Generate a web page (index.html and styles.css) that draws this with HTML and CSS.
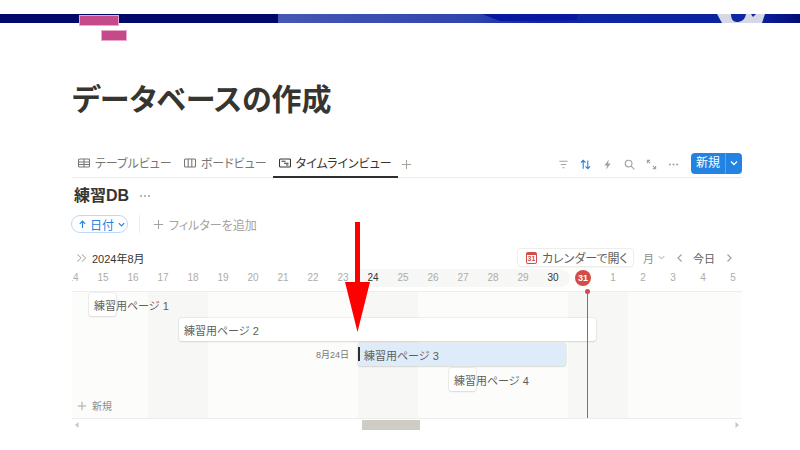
FILE: index.html
```html
<!DOCTYPE html>
<html lang="ja">
<head>
    <meta charset="UTF-8">
    <title>データベースの作成</title>
    <link rel="stylesheet" href="styles.css">
</head>
<body>
    <div class="banner">
        <svg width="800" height="9" viewBox="0 0 800 9">
            <defs>
                <linearGradient id="bannerBlue" x1="0" x2="1" y1="0" y2="0">
                    <stop offset="0" stop-color="#4657b3"/>
                    <stop offset=".38" stop-color="#2f44ae"/>
                    <stop offset=".5" stop-color="#0f27a3"/>
                    <stop offset=".85" stop-color="#0b22a0"/>
                    <stop offset=".93" stop-color="#0a1f9c"/>
                    <stop offset="1" stop-color="#030c74"/>
                </linearGradient>
            </defs>
            <rect width="800" height="9" fill="#00086a"/>
            <rect x="278" width="522" height="9" fill="url(#bannerBlue)"/>
            <path d="M482 0H577V6L500 7Z" fill="#0617a0"/>
            <path d="M717 0H765L762 9H722Z" fill="#d6d8e6"/>
            <path d="M731 0H746C745 6 741 8 737 8C733 8 731 5 731 0ZM751 0H756L753 3Z" fill="#0f27a3"/>
        </svg>
    </div>
    <div class="pink pink-a"></div>
    <div class="pink pink-b"></div>

    <main class="page">
        <h1>データベースの作成</h1>

        <div class="tabbar">
            <div class="tab">
                <svg class="ico" viewBox="0 0 12 12"><path d="M1.5 2h9a1 1 0 0 1 1 1v6a1 1 0 0 1-1 1h-9a1 1 0 0 1-1-1V3a1 1 0 0 1 1-1ZM.5 5h11M.5 7.5h11M6 2v8"/></svg>
                テーブルビュー
            </div>
            <div class="tab">
                <svg class="ico" viewBox="0 0 12 12"><path d="M1.5 2h9a1 1 0 0 1 1 1v6a1 1 0 0 1-1 1h-9a1 1 0 0 1-1-1V3a1 1 0 0 1 1-1ZM4.2 2v8M7.8 2v8"/></svg>
                ボードビュー
            </div>
            <div class="tab active">
                <svg class="ico" viewBox="0 0 12 12"><path d="M1.5 2h9a1 1 0 0 1 1 1v6a1 1 0 0 1-1 1h-9a1 1 0 0 1-1-1V3a1 1 0 0 1 1-1ZM2.5 4.2h4M5 6.2h4.5M7 8h2.5"/></svg>
                タイムラインビュー
            </div>
            <svg class="tab-add" viewBox="0 0 12 12"><path d="M6 1v10M1 6h10"/></svg>

            <div class="tools">
                <svg class="tool" viewBox="0 0 12 12"><path d="M1.5 2.5h9M3 6h6M4.8 9.5h2.4"/></svg>
                <svg class="tool tool-on" viewBox="0 0 12 12"><path d="M3.5 10.5v-9M1 4l2.5-2.5L6 4M8.5 1.5v9M6 8l2.500 2.500L11 8"/></svg>
                <svg class="tool tool-fill" viewBox="0 0 12 12"><path d="M7.500.5 2.500 7h3l-1 4.500 5-6.500h-3Z"/></svg>
                <svg class="tool" viewBox="0 0 12 12"><circle cx="5" cy="5" r="3.700"/><path d="m7.800 7.800 3.500 3.500"/></svg>
                <svg class="tool" viewBox="0 0 12 12"><path d="M1.500 4.500v-3h3M1.500 1.500l3 3M10.500 7.500v3h-3M10.500 10.500l-3-3"/></svg>
                <svg class="tool tool-fill" viewBox="0 0 12 12"><circle cx="2" cy="6" r="1.100"/><circle cx="6" cy="6" r="1.100"/><circle cx="10" cy="6" r="1.100"/></svg>
            </div>
            <div class="new-btn">
                <span class="new-label">新規</span>
                <span class="new-arrow"><svg viewBox="0 0 10 10"><path d="m2 3.500 3 3 3-3"/></svg></span>
            </div>
        </div>

        <div class="db-title">
            <h2>練習DB</h2>
            <svg class="db-more" viewBox="0 0 12 4"><circle cx="2" cy="2" r="1"/><circle cx="6" cy="2" r="1"/><circle cx="10" cy="2" r="1"/></svg>
        </div>

        <div class="filters">
            <div class="sort-pill">
                <svg viewBox="0 0 10 10" class="pill-up"><path d="M5 9V1.500M2 4.300l3-3 3 3"/></svg>
                日付
                <svg viewBox="0 0 10 10" class="pill-down"><path d="m2 3.500 3 3 3-3"/></svg>
            </div>
            <div class="sep"></div>
            <div class="add-filter">
                <svg viewBox="0 0 12 12"><path d="M6 1v10M1 6h10"/></svg>
                フィルターを追加
            </div>
        </div>

        <div class="tl-head">
            <svg class="tl-collapse" viewBox="0 0 12 10"><path d="m1.500 1 4 4-4 4M6.500 1l4 4-4 4"/></svg>
            <span class="tl-month">2024年8月</span>
            <div class="tl-right">
                <div class="cal-btn">
                    <span class="cal-icon">31</span>
                    カレンダーで開く
                </div>
                <span class="tl-unit">月
                    <svg viewBox="0 0 10 10"><path d="m2 3.500 3 3 3-3"/></svg>
                </span>
                <svg class="tl-nav" viewBox="0 0 10 10"><path d="M6.500 1.500 3 5l3.500 3.500"/></svg>
                <span class="tl-today">今日</span>
                <svg class="tl-nav" viewBox="0 0 10 10"><path d="M3.500 1.500 7 5 3.500 8.500"/></svg>
            </div>
        </div>

        <div class="timeline">
            <div class="days">
                <div class="range"></div>
                <span>14</span><span>15</span><span>16</span><span>17</span><span>18</span><span>19</span>
                <span>20</span><span>21</span><span>22</span><span>23</span><span class="strong">24</span><span>25</span>
                <span>26</span><span>27</span><span>28</span><span>29</span><span class="strong">30</span>
                <span class="today">31</span>
                <span>1</span><span>2</span><span>3</span><span>4</span><span>5</span>
            </div>
            <div class="rows">
                <div class="weekend we-1"></div>
                <div class="weekend we-2"></div>
                <div class="weekend we-3"></div>
                <div class="bar bar-1">練習用ページ 1</div>
                <div class="bar bar-2">練習用ページ 2</div>
                <div class="bar-date">8月24日</div>
                <div class="bar bar-3"><i class="handle"></i>練習用ページ 3</div>
                <div class="bar bar-4">練習用ページ 4</div>
                <div class="row-new">
                    <svg viewBox="0 0 12 12"><path d="M6 1v10M1 6h10"/></svg>
                    新規
                </div>
            </div>
            <div class="now-dot"></div>
            <div class="now-line"></div>
        </div>

        <div class="scroll">
            <svg class="scroll-arrow" viewBox="0 0 6 8"><path d="M4.500 1v6L1 4Z"/></svg>
            <div class="scroll-track"><div class="scroll-thumb"></div></div>
            <svg class="scroll-arrow" viewBox="0 0 6 8"><path d="M1.500 1v6L5 4Z"/></svg>
        </div>
    </main>

    <svg class="red-arrow" width="26" height="112" viewBox="0 0 26 112">
        <path d="M10 0h5v60h10L12.500 110 0 60h10Z" fill="#fe0000"/>
    </svg>
</body>
</html>
```

FILE: styles.css
```css
*{box-sizing:border-box;}
body{
    position:relative;
    margin:0;
    height:450px;
    overflow:hidden;
    background-color:#fff;
    color:#37352f;
    font-family:"Liberation Sans","Noto Sans CJK JP",sans-serif;
    font-feature-settings:"palt";
}
h1,h2{margin:0;}
svg{display:block;flex:none;}

.banner{height:9px;margin-top:14px;}
.pink{
    position:absolute;
    background-color:#c54a8b;
    box-shadow:0 0 0 1px #e6a9c9 inset;
}
.pink-a{left:79px;top:15px;width:40px;height:11px;}
.pink-b{left:101px;top:30px;width:26px;height:11px;}

.page{width:670px;margin-left:72px;}
.page h1{
    height:44px;
    margin-top:55px;
    font-size:30px;
    font-weight:700;
    line-height:44px;
}

/* tabs */
.tabbar{
    display:flex;
    align-items:center;
    height:26px;
    margin-top:30px;
    border-bottom:1px solid #ededec;
}
.tab{
    display:flex;
    align-items:center;
    gap:5px;
    height:26px;
    padding:0 6px 2px;
    color:#787774;
    font-size:12px;
    border-bottom:2px solid transparent;
}
.tab.active{color:#37352f;border-bottom-color:#2f2e2a;}
.ico{width:12px;height:12px;fill:none;stroke:currentColor;stroke-width:1.100;}
.tab-add{width:11px;height:11px;margin-left:3px;fill:none;stroke:#a5a29c;stroke-width:1.100;}
.tools{
    display:flex;
    align-items:center;
    gap:11px;
    margin-left:auto;
}
.tool{width:11px;height:11px;fill:none;stroke:#a5a29c;stroke-width:1.200;}
.tool-on{stroke:#2383e2;}
.tool-fill{fill:#a5a29c;stroke:none;}
.new-btn{
    display:flex;
    width:51px;
    height:21px;
    margin-left:12px;
    margin-bottom:3px;
    border-radius:4px;
    background-color:#2383e2;
    color:#fff;
    font-size:12px;
    line-height:21px;
}
.new-label{width:34px;text-align:center;}
.new-arrow{
    display:flex;
    flex:1;
    align-items:center;
    justify-content:center;
    border-left:1px solid #5ba3ea;
}
.new-arrow svg{width:10px;height:10px;fill:none;stroke:#fff;stroke-width:1.300;}

/* db title */
.db-title{
    display:flex;
    align-items:center;
    gap:10px;
    height:24px;
    margin-top:6px;
    padding-left:2px;
}
.db-title h2{font-size:16px;font-weight:700;line-height:24px;}
.db-more{width:12px;height:4px;fill:#a5a29c;}

/* filters */
.filters{
    display:flex;
    align-items:center;
    height:18px;
    margin-top:7px;
}
.sort-pill{
    display:flex;
    align-items:center;
    gap:3px;
    width:57px;
    height:18px;
    margin-left:-1px;
    padding-left:6px;
    border:1px solid #bcd9f5;
    border-radius:9px;
    color:#2383e2;
    font-size:12px;
}
.sort-pill svg{width:9px;height:9px;fill:none;stroke:#2383e2;stroke-width:1.300;}
.sep{width:1px;height:18px;margin:0 13px 0 11px;background-color:#ededec;}
.add-filter{
    display:flex;
    align-items:center;
    gap:5px;
    color:#a5a29c;
    font-size:12px;
}
.add-filter svg{width:11px;height:11px;fill:none;stroke:#a5a29c;stroke-width:1.100;}

/* timeline header */
.tl-head{
    display:flex;
    align-items:center;
    height:19px;
    margin-top:15px;
    padding-left:4px;
}
.tl-collapse{width:11px;height:10px;fill:none;stroke:#b4b2ad;stroke-width:1.100;}
.tl-month{margin-left:5px;font-size:11px;}
.tl-right{display:flex;align-items:center;margin-left:auto;}
.cal-btn{
    display:flex;
    align-items:center;
    gap:5px;
    width:117px;
    height:19px;
    padding-left:8px;
    border:1px solid #ededec;
    border-radius:4px;
    color:#5f5e5b;
    font-size:12px;
    box-shadow:0 1px 1px rgba(15,15,15,.04);
}
.cal-icon{
    width:11px;
    height:12px;
    border:1px solid #d44c47;
    border-top-width:3px;
    border-radius:2px;
    color:#d44c47;
    font-size:7px;
    font-weight:700;
    line-height:8px;
    text-align:center;
}
.tl-unit{
    display:flex;
    align-items:center;
    gap:3px;
    margin-left:9px;
    color:#8f8d88;
    font-size:11px;
}
.tl-unit svg{width:9px;height:9px;fill:none;stroke:#a5a29c;stroke-width:1.100;}
.tl-nav{width:10px;height:10px;margin:0 8px 0 9px;fill:none;stroke:#a5a29c;stroke-width:1.200;}
.tl-nav:last-child{margin-right:8px;}
.tl-today{color:#5f5e5b;font-size:11px;}

/* timeline body */
.timeline{
    position:relative;
    height:152px;
    overflow:hidden;
    border-bottom:1px solid #ededec;
}
.days{
    position:relative;
    display:grid;
    grid-template-columns:repeat(23,30px);
    height:25px;
    margin-left:-14px;
    border-bottom:1px solid #ededec;
    color:#aeaca6;
    font-size:10px;
    line-height:22px;
    text-align:center;
}
.days span{position:relative;}
.days .strong{color:#37352f;}
.days .today{
    width:16px;
    height:16px;
    margin:3px 0 0 7px;
    border-radius:50%;
    background-color:#d44c47;
    color:#fff;
    font-size:9px;
    font-weight:700;
    line-height:16px;
}
.range{
    position:absolute;
    left:300px;
    top:2px;
    width:212px;
    height:18px;
    border-radius:0 9px 9px 0;
    background-color:#f7f7f5;
}
.rows{
    display:grid;
    grid-template-columns:repeat(23,30px);
    grid-template-rows:repeat(4,25px) 27px;
    height:127px;
    margin-left:-14px;
    background-color:#fcfcfb;
}
.weekend{grid-row:1 / 6;background-color:#f7f7f5;}
.we-1{grid-column:4 / 6;}
.we-2{grid-column:11 / 13;}
.we-3{grid-column:18 / 20;}
.bar{
    position:relative;
    display:flex;
    align-items:center;
    height:23px;
    margin:1px 2px 1px 1px;
    padding-left:5px;
    border-radius:3px;
    background-color:#fff;
    color:#5f5e5b;
    font-size:11px;
    white-space:nowrap;
    box-shadow:0 0 0 1px rgba(15,15,15,.05),0 1px 2px rgba(15,15,15,.1);
}
.bar-1{grid-column:2;grid-row:1;}
.bar-2{grid-column:5 / 19;grid-row:2;}
.bar-3{
    grid-column:11 / 18;
    grid-row:3;
    margin-left:0;
    padding-left:6px;
    background-color:#deebf9;
}
.bar-4{grid-column:14;grid-row:4;}
.handle{
    position:absolute;
    left:0;
    top:4px;
    width:2px;
    height:14px;
    background-color:#2f2e2a;
}
.bar-date{
    grid-column:1 / 11;
    grid-row:3;
    align-self:center;
    padding-right:9px;
    color:#787774;
    font-size:9px;
    text-align:right;
}
.row-new{
    display:flex;
    grid-column:1 / 6;
    grid-row:5;
    align-items:center;
    gap:5px;
    padding-left:19px;
    color:#8f8d88;
    font-size:10px;
}
.row-new svg{width:10px;height:10px;fill:none;stroke:#a5a29c;stroke-width:1.100;}
.now-dot{
    position:absolute;
    left:513px;
    top:22px;
    width:5px;
    height:5px;
    border-radius:50%;
    background-color:#d44c47;
}
.now-line{
    position:absolute;
    left:515px;
    top:25px;
    width:1px;
    height:127px;
    background-color:#d44c47;
}

/* scrollbar */
.scroll{
    display:flex;
    align-items:center;
    gap:0;
    height:12px;
}
.scroll-arrow{width:6px;height:8px;margin:0 2px;fill:#c9c7c2;}
.scroll-track{flex:1;height:10px;}
.scroll-thumb{width:58px;height:10px;margin-left:280px;background-color:#cfcbc5;}

.red-arrow{position:absolute;left:345px;top:222px;}
```
